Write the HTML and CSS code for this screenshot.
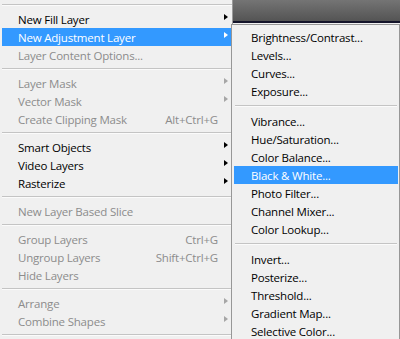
FILE: index.html
```html
<!DOCTYPE html>
<html lang="en">
<head>
    <meta charset="UTF-8">
    <meta name="viewport" content="width=device-width, initial-scale=1.0">
    <title>Layer Menu</title>
    <link rel="stylesheet" href="styles.css">
</head>
<body>
    <div class="screen">
        <ul class="menu">
            <li class="sep first"></li>
            <li class="item sub">New Fill Layer</li>
            <li class="item sub active">New Adjustment Layer</li>
            <li class="item off">Layer Content Options...</li>
            <li class="sep"></li>
            <li class="item sub off">Layer Mask</li>
            <li class="item sub off">Vector Mask</li>
            <li class="item off">Create Clipping Mask<span class="key">Alt+Ctrl+G</span></li>
            <li class="sep"></li>
            <li class="item sub">Smart Objects</li>
            <li class="item sub">Video Layers</li>
            <li class="item sub">Rasterize</li>
            <li class="sep"></li>
            <li class="item off">New Layer Based Slice</li>
            <li class="sep"></li>
            <li class="item off">Group Layers<span class="key">Ctrl+G</span></li>
            <li class="item off">Ungroup Layers<span class="key">Shift+Ctrl+G</span></li>
            <li class="item off">Hide Layers</li>
            <li class="sep"></li>
            <li class="item sub off">Arrange</li>
            <li class="item sub off">Combine Shapes</li>
            <li class="sep"></li>
        </ul>

        <div class="workspace">
            <div class="canvas-edge"></div>
        </div>

        <!-- submenu of New Adjustment Layer -->
        <ul class="submenu">
            <li class="item">Brightness/Contrast...</li>
            <li class="item">Levels...</li>
            <li class="item">Curves...</li>
            <li class="item">Exposure...</li>
            <li class="sep"></li>
            <li class="item">Vibrance...</li>
            <li class="item">Hue/Saturation...</li>
            <li class="item">Color Balance...</li>
            <li class="item active">Black &amp; White...</li>
            <li class="item">Photo Filter...</li>
            <li class="item">Channel Mixer...</li>
            <li class="item">Color Lookup...</li>
            <li class="sep"></li>
            <li class="item">Invert...</li>
            <li class="item">Posterize...</li>
            <li class="item">Threshold...</li>
            <li class="item">Gradient Map...</li>
            <li class="item">Selective Color...</li>
        </ul>
    </div>
</body>
</html>
```

FILE: styles.css
```css
body {
    margin: 0;
    background-color: #f0f0f0;
    font-family: "Open Sans", "Noto Sans", sans-serif;
    font-size: 11.5px;
    letter-spacing: -0.2px;
    color: #000;
    overflow: hidden;
}

.screen {
    position: relative;
    display: flex;
    width: 400px;
    height: 339px;
    overflow: hidden;
}

ul {
    list-style: none;
    margin: 0;
}

/* main Layer menu */
.menu {
    width: 230px;
    padding: 0 0 0 2px;
    border-right: 1px solid #9a9a9a;
    background-color: #f0f0f0;
}

.item {
    position: relative;
    display: flex;
    align-items: center;
    height: 18px;
    padding-left: 16px;
    padding-right: 14px;
    white-space: nowrap;
}

.item .key {
    margin-left: auto;
}

.item.off {
    color: #8c8c8c;
}

.item.active {
    background-color: #3399ff;
    color: #fff;
}

/* little arrow for items with a submenu */
.item.sub::after {
    content: "";
    position: absolute;
    right: 4px;
    top: 4px;
    border-left: 4px solid #000;
    border-top: 3px solid transparent;
    border-bottom: 3px solid transparent;
}

.item.sub.off::after {
    border-left-color: #a6a6a6;
}

.item.sub.active::after {
    border-left-color: #fff;
}

.sep {
    height: 10px;
    position: relative;
}

.sep::before {
    content: "";
    position: absolute;
    left: 0;
    right: 0;
    top: 4px;
    border-top: 1px solid #c4c4c4;
    border-bottom: 1px solid #fbfbfb;
}

/* dark strip of the document window behind */
.workspace {
    flex: 1;
}

.canvas-edge {
    height: 21px;
    background: linear-gradient(#747474, #545454);
    border-bottom: 2px solid #14142a;
}

/* New Adjustment Layer submenu */
.submenu {
    position: absolute;
    left: 231px;
    top: 24px;
    width: 164px;
    height: 330px;
    padding: 3px 1px 0 2px;
    border: 1px solid #979797;
    background-color: #f0f0f0;
}

.submenu .item {
    padding-left: 17px;
}

.submenu .sep {
    height: 12px;
}

.submenu .sep::before {
    top: 5px;
    left: 1px;
    right: 1px;
}
```
